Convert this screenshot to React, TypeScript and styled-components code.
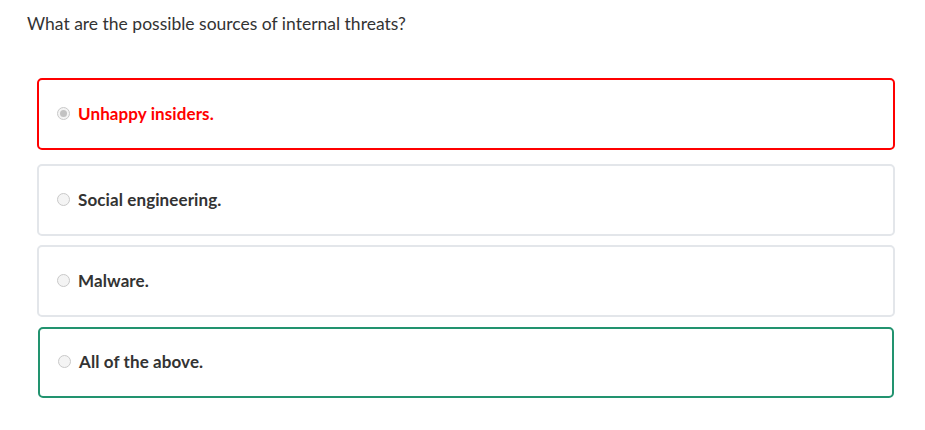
import React from "react";
import styled, { createGlobalStyle, css } from "styled-components";

const GlobalStyle = createGlobalStyle`
  html, body { margin: 0; padding: 0; background: #ffffff; }
  body { font-family: Lato, "Open Sans", sans-serif; }
`;

type Status = "wrong" | "neutral" | "correct";

const Page = styled.div`
  padding: 13px 30px 20px 27px;
`;

const Question = styled.div`
  font-size: 17.5px;
  line-height: 1.2;
  color: #333333;
  margin-bottom: 44px;
`;

const Options = styled.div`
  display: flex;
  flex-direction: column;
  padding-left: 10px;
`;

const Option = styled.label<{ $status: Status }>`
  display: flex;
  align-items: center;
  gap: 8px;
  height: 72px;
  box-sizing: border-box;
  padding: 0 0 2px 18px;
  border-radius: 5px;
  border: 2px solid #e3e6ea;
  margin-bottom: 9px;
  font-size: 17px;
  font-weight: 700;
  letter-spacing: 0.1px;
  color: #333333;
  ${(p) =>
    p.$status === "wrong" &&
    css`
      border-color: #ff0000;
      color: #ff0000;
      margin-bottom: 14px;
    `}
  ${(p) =>
    p.$status === "correct" &&
    css`
      border-color: #22936f;
      height: 71px;
      margin: 1px 1px 0 1px;
      padding-left: 18px;
    `}
`;

const Radio = styled.span<{ $checked: boolean }>`
  flex: none;
  width: 13px;
  height: 13px;
  box-sizing: border-box;
  border-radius: 50%;
  border: 1px solid #c9c9c9;
  background: #f4f4f4;
  display: flex;
  align-items: center;
  justify-content: center;
  &::after {
    content: "";
    display: ${(p) => (p.$checked ? "block" : "none")};
    width: 7px;
    height: 7px;
    border-radius: 50%;
    background: #c2c2c2;
  }
`;

const options: { text: string; status: Status; checked: boolean }[] = [
  { text: "Unhappy insiders.", status: "wrong", checked: true },
  { text: "Social engineering.", status: "neutral", checked: false },
  { text: "Malware.", status: "neutral", checked: false },
  { text: "All of the above.", status: "correct", checked: false },
];

export default function App() {
  return (
    <>
      <GlobalStyle />
      <Page>
        <Question>What are the possible sources of internal threats?</Question>
        <Options>
          {options.map((o) => (
            <Option key={o.text} $status={o.status}>
              <Radio $checked={o.checked} />
              <span>{o.text}</span>
            </Option>
          ))}
        </Options>
      </Page>
    </>
  );
}
